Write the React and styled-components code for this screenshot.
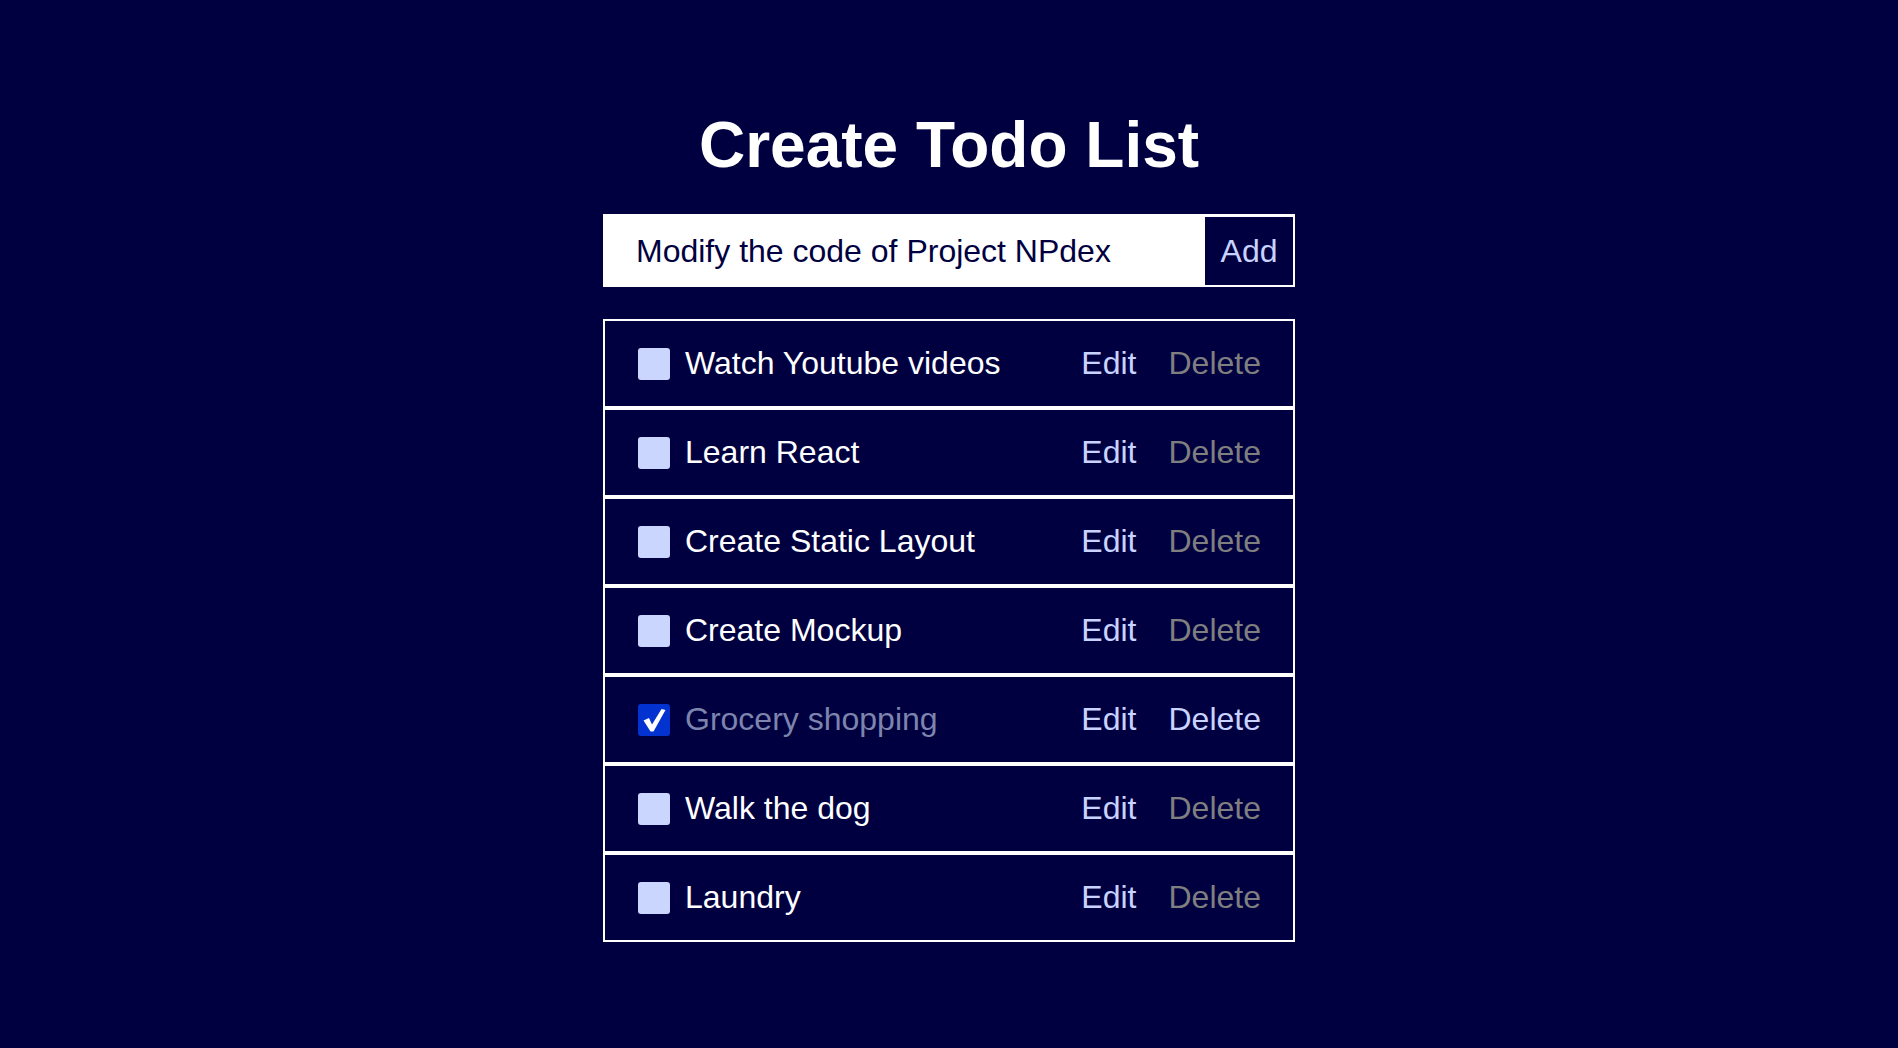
import React from "react";
import styled, { createGlobalStyle } from "styled-components";

const GlobalStyle = createGlobalStyle`
  html, body {
    margin: 0;
    padding: 0;
    background: #000040;
    font-family: "Liberation Sans", Arial, sans-serif;
  }
  * { box-sizing: border-box; }
`;

const Page = styled.main`
  min-height: 1048px;
  background: #000040;
  display: flex;
  justify-content: center;
  padding-top: 108px;
`;

const Container = styled.div`
  width: 692px;
  display: flex;
  flex-direction: column;
`;

const Title = styled.h1`
  margin: 0 0 32px;
  font-size: 64px;
  font-weight: 700;
  line-height: normal;
  color: #ffffff;
  text-align: center;
  white-space: nowrap;
`;

const Form = styled.form`
  display: flex;
  align-items: flex-end;
  height: 73px;
  background: #ffffff;
  margin: 0 0 32px;
`;

const Input = styled.input`
  flex: 1;
  min-width: 0;
  height: 72px;
  border: none;
  outline: none;
  background: #ffffff;
  color: #000040;
  font-family: inherit;
  font-size: 32px;
  padding: 0 0 0 33px;
`;

const AddButton = styled.button`
  width: 92px;
  height: 72px;
  border: 2px solid #ffffff;
  background: #000040;
  color: #c8d3ff;
  font-family: inherit;
  font-size: 32px;
  padding: 0;
`;

const List = styled.ul`
  list-style: none;
  margin: 0;
  padding: 0;
`;

const Row = styled.li`
  display: flex;
  align-items: center;
  height: 89px;
  border: 2px solid #ffffff;
  padding: 0 32px 0 33px;
`;

const Check = styled.span`
  width: 32px;
  height: 32px;
  flex: none;
  border-radius: 3px;
  background: ${(p) => (p.$checked ? "#0232cf" : "#cbd6ff")};
  display: flex;
  align-items: center;
  justify-content: center;
  margin-right: 15px;
`;

const Label = styled.span`
  flex: 1;
  font-size: 32px;
  color: ${(p) => (p.$done ? "#7d84ad" : "#ffffff")};
  white-space: nowrap;
`;

const Actions = styled.div`
  display: flex;
  gap: 32px;
`;

const ActionButton = styled.button`
  background: none;
  border: none;
  padding: 0;
  font-family: inherit;
  font-size: 32px;
  color: ${(p) => (p.$muted ? "#7f7f7f" : "#c8d3ff")};
  cursor: pointer;
`;

const todos = [
  { text: "Watch Youtube videos", done: false },
  { text: "Learn React", done: false },
  { text: "Create Static Layout", done: false },
  { text: "Create Mockup", done: false },
  { text: "Grocery shopping", done: true },
  { text: "Walk the dog", done: false },
  { text: "Laundry", done: false },
];

const CheckMark = () => (
  <svg width="26" height="26" viewBox="0 0 26 26" aria-hidden="true">
    <path
      d="M2.5 13.5 L8 11 L11 17.5 L20.5 2 L24.5 3 L12.5 24.5 L9.5 24.5 Z"
      fill="#ffffff"
    />
  </svg>
);

export default function App() {
  return (
    <>
      <GlobalStyle />
      <Page>
        <Container>
          <Title>Create Todo List</Title>
          <Form onSubmit={(e) => e.preventDefault()}>
            <Input defaultValue="Modify the code of Project NPdex" />
            <AddButton type="submit">Add</AddButton>
          </Form>
          <List>
            {todos.map((t) => (
              <Row key={t.text}>
                <Check $checked={t.done}>{t.done && <CheckMark />}</Check>
                <Label $done={t.done}>{t.text}</Label>
                <Actions>
                  <ActionButton>Edit</ActionButton>
                  <ActionButton $muted={!t.done}>Delete</ActionButton>
                </Actions>
              </Row>
            ))}
          </List>
        </Container>
      </Page>
    </>
  );
}
